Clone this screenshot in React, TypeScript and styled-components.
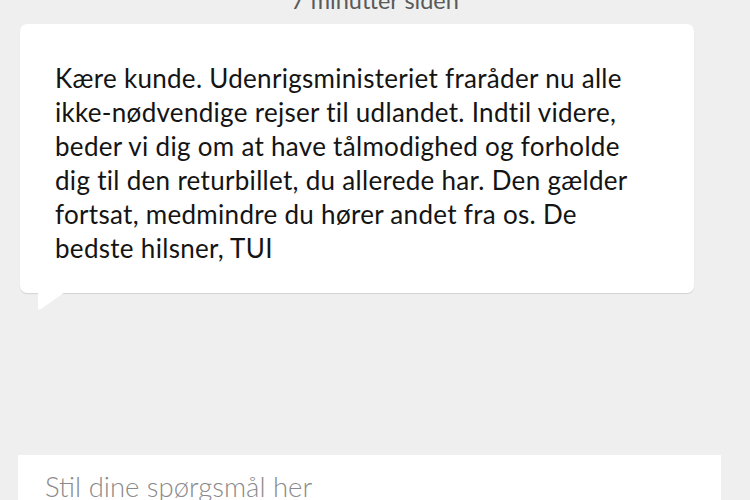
import React from "react";
import styled, { createGlobalStyle } from "styled-components";

const Global = createGlobalStyle`
  html, body { margin: 0; padding: 0; background: #efefef; overflow: hidden; }
  body { font-family: Lato, "Noto Sans", sans-serif; }
`;

const Page = styled.div`
  width: 750px;
  height: 500px;
  display: flex;
  flex-direction: column;
  overflow: hidden;
  background: #efefef;
`;

const Timestamp = styled.div`
  height: 14px;
  margin-top: -12px;
  text-align: center;
  font-size: 23.5px;
  line-height: 24px;
  color: #5a5a5a;
  font-weight: 400;
`;

const Bubble = styled.div`
  position: relative;
  margin: 22px 0 0 20px;
  width: 674px;
  box-sizing: border-box;
  padding: 37px 20px 28px 35px;
  background: #fff;
  border-radius: 7px;
  box-shadow: 0 1px 1px rgba(0, 0, 0, 0.12);
  font-size: 26px;
  letter-spacing: 0.3px;
  line-height: 34px;
  color: #141414;
  white-space: nowrap;
`;

const Tail = styled.svg`
  position: absolute;
  left: 17px;
  bottom: -18px;
`;

const Spacer = styled.div`
  flex: 1;
`;

const InputBox = styled.div`
  flex: none;
  margin: 0 29px 0 18px;
  height: 45px;
  box-sizing: border-box;
  background: #fff;
  padding: 15px 0 0 27px;
  font-size: 27.5px;
  font-weight: 300;
  color: #8a8a8a;
  line-height: 34px;
  white-space: nowrap;
`;

const lines = [
  "Kære kunde. Udenrigsministeriet fraråder nu alle",
  "ikke-nødvendige rejser til udlandet. Indtil videre,",
  "beder vi dig om at have tålmodighed og forholde",
  "dig til den returbillet, du allerede har. Den gælder",
  "fortsat, medmindre du hører andet fra os. De",
  "bedste hilsner, TUI",
];

export default function App() {
  return (
    <Page>
      <Global />
      <Timestamp>7 minutter siden</Timestamp>
      <Bubble>
        {lines.map((l, i) => (
          <React.Fragment key={i}>
            {l}
            {i < lines.length - 1 && <br />}
          </React.Fragment>
        ))}
        <Tail width="30" height="19" viewBox="0 0 30 19">
          <path d="M1 0 L1 16 Q1 19 4 17 L28 0 Z" fill="#fff" />
        </Tail>
      </Bubble>
      <Spacer />
      <InputBox>Stil dine spørgsmål her</InputBox>
    </Page>
  );
}
